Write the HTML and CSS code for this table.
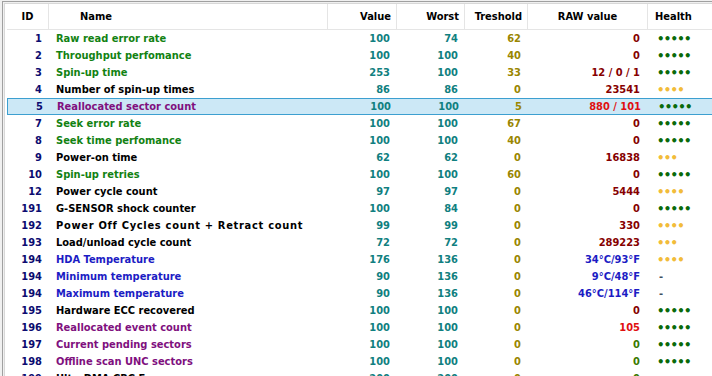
FILE: index.html
```html
<!DOCTYPE html>
<html lang="en">
<head>
    <meta charset="UTF-8">
    <title>S.M.A.R.T. attributes</title>
    <link rel="stylesheet" href="styles.css">
</head>
<body>
    <div class="frame">
        <div class="list">
            <div class="head">
                <div class="h-id">ID</div>
                <div class="h-name">Name</div>
                <div class="h-num">Value</div>
                <div class="h-num">Worst</div>
                <div class="h-num">Treshold</div>
                <div class="h-raw">RAW value</div>
                <div class="h-health">Health</div>
            </div>

            <div class="row">
                <span class="id">1</span><span class="name green">Raw read error rate</span>
                <span class="val">100</span><span class="val">74</span><span class="thr">62</span>
                <span class="raw dark">0</span><span class="health ok">•••••</span>
            </div>
            <div class="row">
                <span class="id">2</span><span class="name green">Throughput perfomance</span>
                <span class="val">100</span><span class="val">100</span><span class="thr">40</span>
                <span class="raw dark">0</span><span class="health ok">•••••</span>
            </div>
            <div class="row">
                <span class="id">3</span><span class="name green">Spin-up time</span>
                <span class="val">253</span><span class="val">100</span><span class="thr">33</span>
                <span class="raw dark">12 / 0 / 1</span><span class="health ok">•••••</span>
            </div>
            <div class="row">
                <span class="id">4</span><span class="name">Number of spin-up times</span>
                <span class="val">86</span><span class="val">86</span><span class="thr">0</span>
                <span class="raw dark">23541</span><span class="health warn">••••</span>
            </div>
            <div class="row selected">
                <span class="id">5</span><span class="name purple">Reallocated sector count</span>
                <span class="val">100</span><span class="val">100</span><span class="thr">5</span>
                <span class="raw red">880 / 101</span><span class="health ok">•••••</span>
            </div>
            <div class="row">
                <span class="id">7</span><span class="name green">Seek error rate</span>
                <span class="val">100</span><span class="val">100</span><span class="thr">67</span>
                <span class="raw dark">0</span><span class="health ok">•••••</span>
            </div>
            <div class="row">
                <span class="id">8</span><span class="name green">Seek time perfomance</span>
                <span class="val">100</span><span class="val">100</span><span class="thr">40</span>
                <span class="raw dark">0</span><span class="health ok">•••••</span>
            </div>
            <div class="row">
                <span class="id">9</span><span class="name">Power-on time</span>
                <span class="val">62</span><span class="val">62</span><span class="thr">0</span>
                <span class="raw dark">16838</span><span class="health warn">•••</span>
            </div>
            <div class="row">
                <span class="id">10</span><span class="name green">Spin-up retries</span>
                <span class="val">100</span><span class="val">100</span><span class="thr">60</span>
                <span class="raw dark">0</span><span class="health ok">•••••</span>
            </div>
            <div class="row">
                <span class="id">12</span><span class="name">Power cycle count</span>
                <span class="val">97</span><span class="val">97</span><span class="thr">0</span>
                <span class="raw dark">5444</span><span class="health warn">••••</span>
            </div>
            <div class="row">
                <span class="id">191</span><span class="name">G-SENSOR shock counter</span>
                <span class="val">100</span><span class="val">84</span><span class="thr">0</span>
                <span class="raw dark">0</span><span class="health ok">•••••</span>
            </div>
            <div class="row">
                <span class="id">192</span><span class="name wide">Power Off Cycles count + Retract count</span>
                <span class="val">99</span><span class="val">99</span><span class="thr">0</span>
                <span class="raw dark">330</span><span class="health warn">••••</span>
            </div>
            <div class="row">
                <span class="id">193</span><span class="name">Load/unload cycle count</span>
                <span class="val">72</span><span class="val">72</span><span class="thr">0</span>
                <span class="raw dark">289223</span><span class="health warn">•••</span>
            </div>
            <div class="row">
                <span class="id">194</span><span class="name blue">HDA Temperature</span>
                <span class="val">176</span><span class="val">136</span><span class="thr">0</span>
                <span class="raw blue">34°C/93°F</span><span class="health warn">••••</span>
            </div>
            <div class="row">
                <span class="id">194</span><span class="name blue">Minimum temperature</span>
                <span class="val">90</span><span class="val">136</span><span class="thr">0</span>
                <span class="raw blue">9°C/48°F</span><span class="health none">-</span>
            </div>
            <div class="row">
                <span class="id">194</span><span class="name blue">Maximum temperature</span>
                <span class="val">90</span><span class="val">136</span><span class="thr">0</span>
                <span class="raw blue">46°C/114°F</span><span class="health none">-</span>
            </div>
            <div class="row">
                <span class="id">195</span><span class="name">Hardware ECC recovered</span>
                <span class="val">100</span><span class="val">100</span><span class="thr">0</span>
                <span class="raw dark">0</span><span class="health ok">•••••</span>
            </div>
            <div class="row">
                <span class="id">196</span><span class="name purple">Reallocated event count</span>
                <span class="val">100</span><span class="val">100</span><span class="thr">0</span>
                <span class="raw red">105</span><span class="health ok">•••••</span>
            </div>
            <div class="row">
                <span class="id">197</span><span class="name purple">Current pending sectors</span>
                <span class="val">100</span><span class="val">100</span><span class="thr">0</span>
                <span class="raw good">0</span><span class="health ok">•••••</span>
            </div>
            <div class="row">
                <span class="id">198</span><span class="name purple">Offline scan UNC sectors</span>
                <span class="val">100</span><span class="val">100</span><span class="thr">0</span>
                <span class="raw good">0</span><span class="health ok">•••••</span>
            </div>
            <div class="row">
                <span class="id">199</span><span class="name">UltraDMA CRC Errors</span>
                <span class="val">200</span><span class="val">200</span><span class="thr">0</span>
                <span class="raw good">0</span><span class="health ok">•••••</span>
            </div>
        </div>
    </div>
</body>
</html>
```

FILE: styles.css
```css
html, body {
    margin: 0;
    height: 100%;
    overflow: hidden;
}

body {
    background: #f0f0f0;
    font-family: "DejaVu Sans", Verdana, sans-serif;
    font-stretch: condensed;
    font-weight: bold;
    font-size: 11px;
}

.frame {
    margin: 1px 0 0 2px;
    border-top: 1px solid #a0a0a0;
    border-left: 1px solid #a0a0a0;
    padding: 1px 0 0 1px;
    background: #f0f0f0;
    height: 100%;
}

.list {
    background: #fff;
    border-top: 1px solid #d8d8d8;
    border-left: 1px solid #d8d8d8;
    padding-left: 2px;
    height: 100%;
    width: 900px;
}

.head,
.row {
    display: grid;
    grid-template-columns: 42px 279px 69px 68px 63px 120px 1fr;
}

.head {
    height: 25px;
    line-height: 26px;
    border-bottom: 1px solid #e5e5e5;
    color: #000;
}

.head > div {
    border-right: 1px solid #e5e5e5;
    white-space: nowrap;
}

.h-id {
    text-align: center;
}

.h-name {
    padding-left: 31px;
}

.h-num {
    text-align: right;
    padding-right: 5px;
}

.h-raw {
    text-align: center;
}

.h-health {
    padding-left: 7px;
}

.row {
    height: 17px;
    line-height: 17px;
    box-sizing: border-box;
    white-space: nowrap;
}

.row.selected {
    background: #cce8f6;
    border: 1px solid #3c9fd0;
    line-height: 15px;
}

.id {
    color: #0c0c70;
    text-align: right;
    padding-right: 7px;
}

.name {
    color: #000;
    padding-left: 7px;
    overflow: hidden;
}

.name.wide {
    letter-spacing: 0.7px;
}

.val {
    color: #108080;
    text-align: right;
    padding-right: 7px;
}

.thr {
    color: #9a8600;
    text-align: right;
    padding-right: 7px;
}

.raw {
    text-align: right;
    padding-right: 8px;
}

.health {
    padding-left: 9px;
    font-size: 13px;
    letter-spacing: -0.7px;
}

.health.none {
    font-size: 11px;
    letter-spacing: 0;
    padding-left: 11px;
    color: #405060;
}

.green { color: #128212; }
.purple { color: #80107e; }
.blue { color: #1c1cc4; }
.dark { color: #860000; }
.red { color: #e01010; }
.good { color: #3a7a00; }

.health.ok { color: #0a6a0a; }
.health.warn { color: #f2bc3a; }
```
